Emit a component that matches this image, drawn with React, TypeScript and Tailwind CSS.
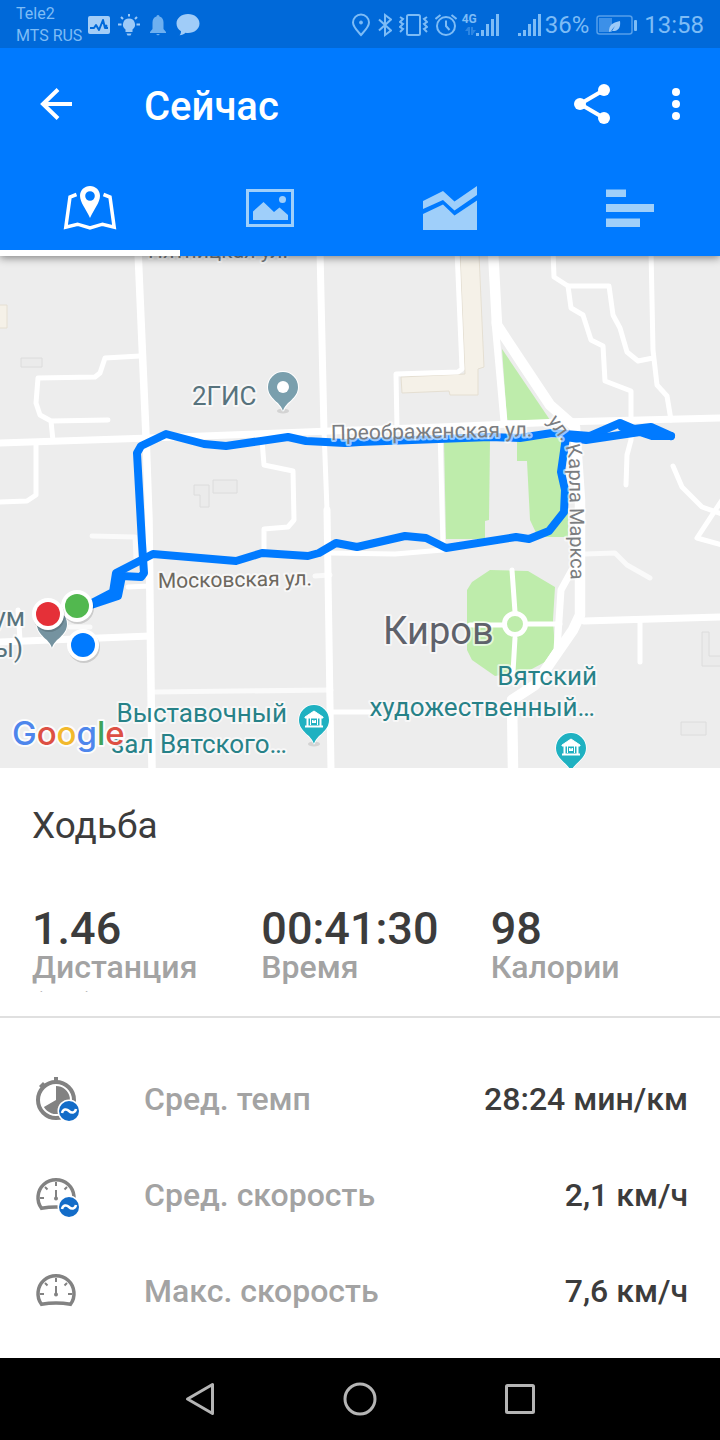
import React, { useState } from "react";

type stat = { value: string; label: string };
type metric = { icon: React.ReactNode; label: string; value: string };

const SignalBars: React.FC = () => (
  <svg viewBox="0 0 23 24" className="h-6 w-[23px] fill-[#7dbcf6]">
    <rect x="0" y="20" width="3" height="3" />
    <rect x="5" y="17" width="3" height="6" />
    <rect x="10" y="11" width="3" height="12" />
    <rect x="15" y="6" width="3" height="17" />
    <rect x="20" y="1" width="3" height="22" />
  </svg>
);

const StatusBar: React.FC = () => (
  <div className="flex h-12 items-center justify-between bg-[#0069d9] px-4 pt-0.5 text-[#7dbcf6]">
    <div className="flex items-center gap-1.5">
      <div className="text-base leading-[22px]">
        <div>Tele2</div>
        <div>MTS RUS</div>
      </div>
      <div className="flex items-center gap-2">
        <svg viewBox="0 0 22 24" className="h-6 w-[22px]">
          <rect y="3" width="22" height="18" rx="2" fill="#a3cdf7" />
          <path
            d="M2 15h4l2-3 3 5 4-10 2 8h3"
            fill="none"
            stroke="#0069d9"
            strokeWidth="2"
            strokeLinejoin="round"
          />
          <circle cx="18" cy="13" r="1.500" fill="#0069d9" />
        </svg>
        <svg viewBox="0 0 22 24" className="h-6 w-[22px]">
          <path
            d="M11 5.500a6 6 0 0 0-3.500 10.900V19h7v-2.600A6 6 0 0 0 11 5.500zM8.500 20.500h5L12.500 22.500h-3z"
            fill="#9ccaf8"
          />
          <path
            d="M11 1v2.500M0 11.500h3.500M18.500 11.500H22M3 4l2 2M19 4l-2 2"
            stroke="#9ccaf8"
            strokeWidth="2"
          />
        </svg>
        <svg viewBox="0 0 20 24" className="h-6 w-5 fill-[#6eb0f0]">
          <path d="M10 2a1.500 1.500 0 0 0-1.500 1.600C5.700 4.300 4.500 6.800 4.500 9.500V16L2 19v1h16v-1l-2.500-3V9.500c0-2.700-1.200-5.200-4-5.900A1.500 1.500 0 0 0 10 2zM8 21h4l-2 1.500z" />
        </svg>
        <svg viewBox="0 0 24 24" className="h-6 w-6 fill-[#a0ccf8]">
          <path d="M12 1C5.500 1 .5 5.200.5 10.500c0 3.200 1.700 6 4.500 7.700.1 1.500-.4 3-1.500 4 2.500-.1 4.500-1 6-2.400.8.1 1.700.2 2.500.2 6.500 0 11.500-4.200 11.500-9.500S18.500 1 12 1z" />
        </svg>
      </div>
    </div>
    <div className="flex items-center gap-[7px] text-2xl leading-none">
      <svg
        viewBox="0 0 20 24"
        className="h-6 w-5 fill-none stroke-[#7dbcf6] stroke-2"
      >
        <path d="M10 22C7 18.500 2 14 2 9.500a8 8 0 0 1 16 0C18 14 13 18.500 10 22z" />
        <circle cx="10" cy="9.500" r="1.500" fill="#7dbcf6" strokeWidth="1" />
      </svg>
      <svg
        viewBox="0 0 14 24"
        className="h-6 w-3.5 fill-none stroke-[#7dbcf6] stroke-2"
      >
        <path d="M1 6.500l12 11L7 22V2l6 4.500-12 11" />
      </svg>
      <svg
        viewBox="0 0 29 24"
        className="h-6 w-[29px] fill-none stroke-[#7dbcf6] stroke-2"
      >
        <rect x="8" y="2" width="13" height="20" rx="1.500" />
        <path d="M1 4l3 2-3 3 3 2-3 3 3 2-3 3M28 4l-3 2 3 3-3 2 3 3-3 2 3 3" />
      </svg>
      <svg
        viewBox="0 0 22 24"
        className="h-6 w-[22px] fill-none stroke-[#7dbcf6] stroke-2"
      >
        <circle cx="11" cy="13" r="9" />
        <path d="M11 7.500V13l3.500 4M.5 6l5-4M21.500 6l-5-4" />
      </svg>
      <div className="flex items-center pr-3">
        <div className="flex h-6 w-3 flex-col text-xs leading-3 font-bold">
          <span className="-ml-0.5">4G</span>
          <svg viewBox="0 0 12 12" className="h-3 w-3 fill-[#2c86e3]">
            <path d="M4 2v8h2V2zM1 6l3-4v4zM7 2v8h2V2zM9 9l3-4H9z" />
          </svg>
        </div>
        <SignalBars />
      </div>
      <div className="flex items-center gap-1">
        <SignalBars />
        <span>36%</span>
      </div>
      <svg viewBox="0 0 41 24" className="h-6 w-[41px]">
        <rect
          x="1"
          y="3"
          width="35"
          height="18"
          rx="2.500"
          fill="none"
          stroke="#559fea"
          strokeWidth="1.500"
        />
        <rect x="3" y="5" width="13" height="14" fill="#3c90e8" />
        <path d="M13 18.500c0-6 3-9 11-10.500 1 7-2 10.500-8 10l3-5-5 6z" fill="#9ccaf8" />
        <rect x="38" y="7" width="3" height="11" rx="1" fill="#7dbcf6" />
      </svg>
      <span>13:58</span>
    </div>
  </div>
);

const tabs = [
  {
    name: "Карта",
    icon: (
      <>
        <path
          d="M13.500 9.500L7 12 2.800 42.200l11.700-3L27 43l12.500-3.800 11.700 3L47 12l-6.500-2.500"
          fill="none"
          stroke="currentColor"
          strokeWidth="3.500"
        />
        <path
          fillRule="evenodd"
          d="M27 1c-5.600 0-10 4.300-10 9.700C17 17.500 23 24 27 33c4-9 10-15.500 10-22.300C37 5.300 32.600 1 27 1zm0 5.200a4.800 4.800 0 1 1 0 9.600 4.800 4.800 0 0 1 0-9.600z"
        />
      </>
    ),
  },
  {
    name: "Фото",
    icon: (
      <>
        <rect
          x="4.500"
          y="5.500"
          width="45"
          height="35"
          fill="none"
          stroke="currentColor"
          strokeWidth="3"
        />
        <circle cx="39.500" cy="14.500" r="3.500" />
        <path d="M10 35v-8.500L20.500 17 31 27l5.500-4.500L45 30v5z" />
      </>
    ),
  },
  {
    name: "График",
    icon: (
      <path d="M0 16L20 6l11.500 10.500L54 1v9L31.500 25.500 20 15 0 24zM0 29l20-9.500 11.500 11L54 15.500V45H0z" />
    ),
  },
  {
    name: "Сводка",
    icon: <path d="M3 4.500h20V12H3zM3 19h48v8H3zM3 33.500h34V42H3z" />,
  },
];

const Header: React.FC = () => {
  const [active, setActive] = useState<number>(0);

  return (
    <header className="relative z-10 bg-[#007aff] text-white shadow-[0_2px_8px_rgba(0,0,0,0.45)]">
      <StatusBar />
      <div className="flex h-28 items-center px-8">
        <button aria-label="Назад" className="flex w-28 items-center">
          <svg
            viewBox="0 0 48 48"
            className="h-12 w-12 fill-none stroke-current stroke-4"
          >
            <path d="M40 24H11M26 9.500L11 24l15 14.500" />
          </svg>
        </button>
        <h1 className="flex-1 pt-1.5 text-[40px] leading-12 font-medium">
          Сейчас
        </h1>
        <div className="flex items-center gap-12">
          <button aria-label="Поделиться">
            <svg viewBox="0 0 48 48" className="h-12 w-12 fill-current">
              <path
                d="M36 10L12 24l24 14"
                fill="none"
                stroke="currentColor"
                strokeWidth="4"
              />
              <circle cx="36" cy="10" r="6" />
              <circle cx="12" cy="24" r="6" />
              <circle cx="36" cy="38" r="6" />
            </svg>
          </button>
          <button aria-label="Ещё">
            <svg viewBox="0 0 24 48" className="h-12 w-6 fill-current">
              <circle cx="12" cy="12" r="4" />
              <circle cx="12" cy="24" r="4" />
              <circle cx="12" cy="36" r="4" />
            </svg>
          </button>
        </div>
      </div>
      <nav className="grid h-24 grid-cols-4">
        {tabs.map((tab, i) => (
          <button
            key={tab.name}
            aria-label={tab.name}
            onClick={() => setActive(i)}
            className={`flex items-center justify-center border-y-6 border-t-transparent ${
              i === active
                ? "border-b-white text-white"
                : "border-b-transparent text-[#9fcffa]"
            }`}
          >
            <svg viewBox="0 0 54 46" className="h-[46px] w-[54px] fill-current">
              {tab.icon}
            </svg>
          </button>
        ))}
      </nav>
    </header>
  );
};

const MuseumPin: React.FC<{ x: number; y: number }> = ({ x, y }) => (
  <g transform={`translate(${x} ${y})`}>
    <ellipse cx="0" cy="24" rx="6" ry="2.500" fill="#d3d3d3" />
    <path
      d="M0 24C-2 15-15 12-15 0a15 15 0 0 1 30 0C15 12 2 15 0 24z"
      fill="#1fb1c1"
      stroke="#fff"
      strokeWidth="1.500"
      paintOrder="stroke"
    />
    <path
      d="M-6.500-3v9M6.500-3v9M-9 6.500H9"
      fill="none"
      stroke="#fff"
      strokeWidth="2"
    />
    <path
      d="M-9-3L0-9l9 6v1H-9zM-3.500-2v7M3.500-2v7M-1.500 3V0L0 1.500 1.500 0v3"
      fill="#fff"
      stroke="#fff"
      strokeWidth="1"
    />
  </g>
);

const Marker: React.FC<{ x: number; y: number; color: string }> = ({
  x,
  y,
  color,
}) => (
  <g>
    <circle cx={x + 1} cy={y + 2} r="16" fill="#000" opacity="0.14" />
    <circle cx={x} cy={y} r="16" fill="#fff" />
    <circle cx={x} cy={y} r="12" fill={color} />
  </g>
);

const RouteMap: React.FC = () => (
  <svg
    viewBox="0 256 720 512"
    preserveAspectRatio="xMidYMid slice"
    className="block h-[512px] w-full bg-[#ededed]"
    role="img"
    aria-label="Маршрут"
  >
    {/* parks */}
    <g fill="#beecab">
      <path d="M502 349l48 71h-43z" />
      <path d="M444 441l46-1-1 80-4 1v18h-39z" />
      <path d="M517 441l46-4 5 73v27h-30l-8-17-3-59h-10z" />
      <path d="M490 570l38 1 27 16-2 33 2 30-10 12-15 8-35 6-23-16-5-10v-60l5-8z" />
    </g>

    {/* buildings */}
    <g fill="#f5f1e8" stroke="#e5dfd2">
      <path d="M460 254h19l5 113-6 2v26h-28l-1-4-47 2-1-16 64-3z" />
      <path d="M-1 305h8v23h-8z" />
    </g>
    <g fill="#ebebeb" stroke="#dcdcdc">
      <path d="M21 358h21v9H21zM213 480h24v13h-24zM681 722h25v13h-25z" />
      <path d="M194 485h15v22h-9v-12h-6zM702 632h7v24h12v10h-19z" />
    </g>

    {/* streets */}
    <g
      fill="none"
      stroke="#fff"
      strokeLinejoin="round"
      strokeLinecap="round"
    >
      <g strokeWidth="5" opacity="0.7">
        <path d="M92 536l43 1 1 22M155 692l176-2M315 576l15-1M585 554l30-1 12 12 23 13M70 627h20" />
      </g>
      <g strokeWidth="5">
        <path d="M140 356l-35 2-5 15-5 4-57 1-2 25 4 12 11 6 57-1M51 421l2 20M36 444v51l-9 6-28 1" />
        <path d="M262 440l2 25 29 6 1 49-6 7-24 2v24M128 587l22-1" />
        <path d="M457 250l5 119-4 3-62 2 1 54M440 430l3 115" />
        <path d="M553 250l1 27 14 9 3 22 12 7 8 25 12 6 2 35 26 10v49l-4 15-1 30" />
        <path d="M568 286h41l4 29 7 13 7 24 11 9 15-3M651 250l2 100 4 35 10 11 4 24" />
        <path d="M673 466l9 21 20 20 20 7M722 500l-25 38 25 7" />
        <path d="M331 553l64 1 48-4M331 712h45" />
        <path d="M512 570l3 42M515 638l-2 34M470 625h33M528 624h32" />
        <circle cx="515" cy="624" r="10.500" />
        <path d="M640 622v40M18 610l2 30M324 430l3 80" />
      </g>
      <g strokeWidth="7">
        <path d="M320 250l4 182M327 510l4 260M-2 642l152-6M584 621l140-4" />
        <path d="M495 322l9 100M572 570l-11 20-4 60-10 15" />
        <path d="M-2 443l152-5 180-7 110-4 120-5 162-4" />
      </g>
      <g strokeWidth="7.500">
        <path d="M138 250l8 186 3 84 3 250" />
      </g>
      <g strokeWidth="10.500">
        <path d="M493 250l4 75 23 35 30 45 25 22 5 73v115l-7 15-38 55-23 15 1 70" />
      </g>
    </g>

    {/* place pins */}
    <ellipse cx="283" cy="411" rx="6" ry="2.500" fill="#d3d3d3" />
    <path
      d="M283 411c-2-9-15-12-15-24a15 15 0 0 1 30 0c0 12-13 15-15 24z"
      fill="#7a9fad"
      stroke="#fff"
      strokeWidth="2"
      paintOrder="stroke"
    />
    <circle cx="283" cy="387" r="6" fill="#fff" />
    <path
      d="M52 648c-2-9-15-12-15-24a15 15 0 0 1 30 0c0 12-13 15-15 24z"
      fill="#7593a0"
      stroke="#fff"
      strokeWidth="2"
      paintOrder="stroke"
    />
    <MuseumPin x={314} y={720} />
    <MuseumPin x={571} y={748} />

    {/* walked route */}
    <g
      fill="none"
      stroke="#007aff"
      strokeWidth="8"
      strokeLinejoin="round"
      strokeLinecap="round"
    >
      <path d="M85 607l33-11 4-20 19 1 3-4-2-30-5-90 4-7 25-12 38 10 22 2 62-9 18 4 39 2 15-1L490 437L520 438L552 433L590 436L620 423L634 429L651 427L671 436" />
      <path d="M671 436L652 436L640 432L586 440L566 437L561 472L565 490L564 512L549 531L529 539L516 537L446 548L426 538L405 536L357 547L336 543L319 553L308 556L262 553L236 561L153 554L116 573L113 592L90 604" />
      <path d="M85 606l31-11 3-22M622 427l20 5 9-2 12 5" />
    </g>

    {/* labels */}
    <g
      fontFamily="Roboto, sans-serif"
      stroke="#fff"
      strokeOpacity="0.6"
      strokeWidth="4"
      strokeLinejoin="round"
      paintOrder="stroke"
    >
      <g fontSize="21" fill="#7b7d80">
        <text x="148" y="258">
          Пятницкая ул.
        </text>
        <text x="331" y="440" transform="rotate(-1 331 440)">
          Преображенская ул.
        </text>
        <path
          id="marx"
          d="M547 421L563 443Q568 450 569 465L571 600"
          fill="none"
          stroke="none"
        />
        <text fontSize="20">
          <textPath href="#marx">ул. Карла Маркса</textPath>
        </text>
        <text x="158" y="588" transform="rotate(-1 158 588)" fill="#6d685f">
          Московская ул.
        </text>
      </g>
      <g fontSize="26" fill="#57737d">
        <text x="192" y="405">
          2ГИС
        </text>
        <text x="25" y="626" textAnchor="end">
          ум
        </text>
        <text x="23" y="657" textAnchor="end">
          ы)
        </text>
      </g>
      <text x="383" y="644" fontSize="38" fill="#5f626b">
        Киров
      </text>
      <g fontSize="26" fill="#278288" textAnchor="end">
        <text x="597" y="685">
          Вятский
        </text>
        <text x="595" y="716">
          художественный…
        </text>
        <text x="287" y="722">
          Выставочный
        </text>
        <text x="287" y="753">
          зал Вятского…
        </text>
      </g>
      <text
        x="12"
        y="745"
        fontSize="33"
        fontFamily="Inter, sans-serif"
        fontWeight="500"
        strokeOpacity="0.9"
      >
        <tspan fill="#4e86ec">G</tspan>
        <tspan fill="#dd5044">o</tspan>
        <tspan fill="#f2b92c">o</tspan>
        <tspan fill="#4e86ec">g</tspan>
        <tspan fill="#40a35b">l</tspan>
        <tspan fill="#dd5044">e</tspan>
      </text>
    </g>

    <Marker x={83} y={645} color="#007aff" />
    <Marker x={77} y={606} color="#52b84f" />
    <Marker x={48} y={614} color="#e53038" />
  </svg>
);

const AverageBadge: React.FC = () => (
  <>
    <circle cx="37" cy="36" r="11.500" fill="#fff" />
    <circle cx="37" cy="36" r="10" fill="#136cc8" />
    <path
      d="M30 38c1-4 4.500-4.500 7-2s6 2 7-2"
      fill="none"
      stroke="#fff"
      strokeWidth="2.500"
    />
  </>
);

const PaceIcon: React.FC = () => (
  <svg viewBox="0 0 48 48" className="h-12 w-12">
    <circle
      cx="24"
      cy="25"
      r="18"
      fill="none"
      stroke="#828282"
      strokeWidth="4"
    />
    <path d="M22 2h4v5h-4zM7 11l4-4 3 3-4 4z" fill="#828282" />
    <path d="M24 25V11a14 14 0 1 1-12.100 21z" fill="#828282" />
    <AverageBadge />
  </svg>
);

const SpeedIcon: React.FC<{ average?: boolean }> = ({ average }) => (
  <svg viewBox="0 0 48 48" className="h-12 w-12">
    <g fill="none" stroke="#828282">
      <path
        d="M9.500 37.300A18 18 0 1 1 38.500 37.300Q24 34.500 9.500 37.300z"
        strokeWidth="3.500"
      />
      <path
        d="M24 11v4M8 27h4M36 27h4M13 16l2.500 2.500M35 16l-2.500 2.500M24 19v8"
        strokeWidth="2"
      />
    </g>
    <circle cx="24" cy="27.500" r="2" fill="#828282" />
    {average && <AverageBadge />}
  </svg>
);

const stats: stat[] = [
  { value: "1.46", label: "Дистанция (км)" },
  { value: "00:41:30", label: "Время" },
  { value: "98", label: "Калории" },
];

const metrics: metric[] = [
  { icon: <PaceIcon />, label: "Сред. темп", value: "28:24 мин/км" },
  { icon: <SpeedIcon average />, label: "Сред. скорость", value: "2,1 км/ч" },
  { icon: <SpeedIcon />, label: "Макс. скорость", value: "7,6 км/ч" },
];

const App: React.FC = () => {
  return (
    <div className="flex min-h-screen flex-col bg-white font-[Roboto,sans-serif] text-[#3c3c3c]">
      <Header />
      <main className="flex-1">
        <RouteMap />
        <section className="border-b-2 border-[#e0e0e0] pt-8 pb-6 pl-8">
          <h2 className="text-[37px] leading-[52px]">Ходьба</h2>
          <div className="grid grid-cols-3 pt-[54px]">
            {stats.map((item) => (
              <div key={item.label}>
                <div className="h-[38px] overflow-hidden text-[45px] leading-[46px] font-medium">
                  {item.value}
                </div>
                <div className="h-12 w-44 overflow-hidden pt-1 text-[32px] leading-[38px] font-medium text-[#a3a3a3]">
                  {item.label}
                </div>
              </div>
            ))}
          </div>
        </section>
        <section className="px-8 pt-[33px] pb-4">
          {metrics.map((item) => (
            <div
              key={item.label}
              className="flex h-24 items-center text-[32px] leading-[38px] font-medium"
            >
              <div className="w-28">{item.icon}</div>
              <div className="flex-1 text-[#a3a3a3]">{item.label}</div>
              <div>{item.value}</div>
            </div>
          ))}
        </section>
      </main>
      <footer className="flex h-[82px] items-center justify-center gap-28 bg-black">
        <button aria-label="Назад">
          <svg
            viewBox="0 0 48 48"
            className="h-12 w-12 fill-none stroke-[#b5b5b5] stroke-3"
          >
            <path d="M36.500 9.500v29L11.500 24z" strokeLinejoin="round" />
          </svg>
        </button>
        <button aria-label="Домой">
          <svg
            viewBox="0 0 48 48"
            className="h-12 w-12 fill-none stroke-[#b5b5b5] stroke-3"
          >
            <circle cx="24" cy="24" r="15" />
          </svg>
        </button>
        <button aria-label="Недавние">
          <svg
            viewBox="0 0 48 48"
            className="h-12 w-12 fill-none stroke-[#b5b5b5] stroke-3"
          >
            <rect x="10.500" y="10.500" width="27" height="27" rx="1" />
          </svg>
        </button>
      </footer>
    </div>
  );
};

export default App;
